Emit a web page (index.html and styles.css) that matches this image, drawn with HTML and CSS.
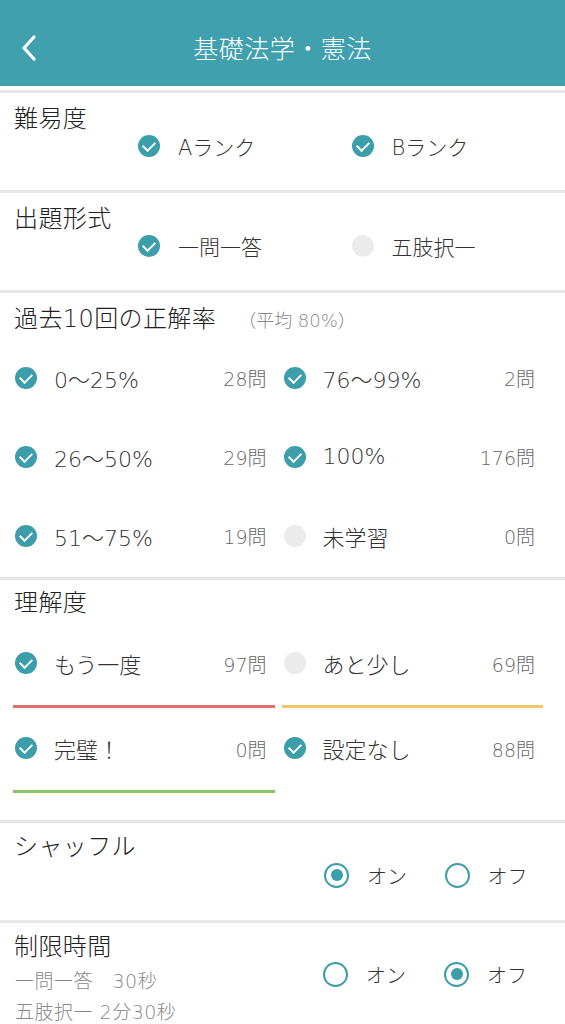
FILE: index.html
```html
<!DOCTYPE html>
<html lang="ja">
<head>
    <meta charset="UTF-8">
    <meta name="viewport" content="width=device-width, initial-scale=1.0">
    <title>基礎法学・憲法</title>
    <link rel="stylesheet" href="styles.css">
</head>
<body>
    <header class="app-bar">
        <button class="back" aria-label="戻る">
            <svg width="18" height="28" viewBox="0 0 18 28"><polyline points="14,3 4,14 14,25" fill="none" stroke="#fff" stroke-width="3.2" stroke-linecap="round" stroke-linejoin="round"/></svg>
        </button>
        <h1 class="app-title">基礎法学・憲法</h1>
    </header>

    <main class="settings">
        <section class="group">
            <h2 class="group-title">難易度</h2>
            <div class="choices">
                <label class="choice"><span class="check on"></span>Aランク</label>
                <label class="choice"><span class="check on"></span>Bランク</label>
            </div>
        </section>

        <section class="group">
            <h2 class="group-title">出題形式</h2>
            <div class="choices">
                <label class="choice"><span class="check on"></span>一問一答</label>
                <label class="choice"><span class="check"></span>五肢択一</label>
            </div>
        </section>

        <section class="group rate">
            <h2 class="group-title">過去10回の正解率<small class="avg">（平均 80%）</small></h2>
            <div class="grid">
                <div class="item"><div class="row"><span class="check on"></span><span class="name">0〜25%</span><span class="count">28問</span></div></div>
                <div class="item"><div class="row"><span class="check on"></span><span class="name">76〜99%</span><span class="count">2問</span></div></div>
                <div class="item"><div class="row"><span class="check on"></span><span class="name">26〜50%</span><span class="count">29問</span></div></div>
                <div class="item"><div class="row"><span class="check on"></span><span class="name">100%</span><span class="count">176問</span></div></div>
                <div class="item"><div class="row"><span class="check on"></span><span class="name">51〜75%</span><span class="count">19問</span></div></div>
                <div class="item"><div class="row"><span class="check"></span><span class="name">未学習</span><span class="count">0問</span></div></div>
            </div>
        </section>

        <section class="group level">
            <h2 class="group-title">理解度</h2>
            <div class="grid">
                <div class="item"><div class="row"><span class="check on"></span><span class="name">もう一度</span><span class="count">97問</span></div><div class="bar red"></div></div>
                <div class="item"><div class="row"><span class="check"></span><span class="name">あと少し</span><span class="count">69問</span></div><div class="bar yellow"></div></div>
                <div class="item"><div class="row"><span class="check on"></span><span class="name">完璧！</span><span class="count">0問</span></div><div class="bar green"></div></div>
                <div class="item"><div class="row"><span class="check on"></span><span class="name">設定なし</span><span class="count">88問</span></div></div>
            </div>
        </section>

        <section class="group switch">
            <h2 class="group-title">シャッフル</h2>
            <div class="radios">
                <label class="radio"><span class="dot on"></span>オン</label>
                <label class="radio"><span class="dot"></span>オフ</label>
            </div>
        </section>

        <section class="group switch timer">
            <div class="timer-info">
                <h2 class="group-title">制限時間</h2>
                <p class="note">一問一答　30秒</p>
                <p class="note">五肢択一 2分30秒</p>
            </div>
            <div class="radios">
                <label class="radio"><span class="dot"></span>オン</label>
                <label class="radio"><span class="dot on"></span>オフ</label>
            </div>
        </section>
    </main>
</body>
</html>
```

FILE: styles.css
```css
:root {
    --teal: #41a0ae;
    --check: #3c9dab;
    --off: #ebebeb;
    --line: #e6e6eb;
    --text: #222;
    --muted: #666;
}

* {
    box-sizing: border-box;
    margin: 0;
    padding: 0;
}

body {
    /* DejaVu gives the wide digits, CJK falls through to Noto */
    font-family: "DejaVu Sans", "Noto Sans CJK JP", sans-serif;
    font-weight: 300;
    color: var(--text);
    background: #fff;
    overflow: hidden;
}

.app-bar {
    height: 86px;
    background: var(--teal);
    display: flex;
    align-items: center;
    justify-content: center;
    position: relative;
}

.back {
    position: absolute;
    left: 20px;
    top: 34px;
    background: none;
    border: none;
    display: flex;
}

.app-title {
    color: #fff;
    font-size: 25px;
    font-weight: 300;
    letter-spacing: 0.5px;
    margin-top: 8px;
}

.settings {
    margin-top: 4px;
}

.group {
    border-top: 3px solid var(--line);
    padding: 13px 0 31px;
}

.group-title {
    font-size: 24px;
    font-weight: 300;
    line-height: 26px;
    padding-left: 14px;
    letter-spacing: 0.4px;
}

.avg {
    font-size: 18px;
    color: #888;
    margin-left: 22px;
    letter-spacing: 0;
}

/* check circles */
.check {
    width: 22px;
    height: 22px;
    border-radius: 50%;
    background: var(--off);
    flex-shrink: 0;
    position: relative;
}

.check.on {
    background: var(--check);
}

.check.on::after {
    content: "";
    position: absolute;
    left: 7px;
    top: 4px;
    width: 6px;
    height: 10px;
    border: solid #fff;
    border-width: 0 2.6px 2.6px 0;
    transform: rotate(45deg);
}

.choices {
    display: flex;
    padding-left: 138px;
    height: 26px;
    align-items: center;
    margin-top: 1px;
}

.choice {
    width: 214px;
    display: flex;
    align-items: center;
    gap: 18px;
    font-size: 21px;
    color: #333;
}

/* two column lists */
.grid {
    display: grid;
    grid-template-columns: 1fr 1fr;
    column-gap: 7px;
    padding: 0 22px 0 13px;
}

.rate {
    padding-bottom: 2px;
}

.rate .grid {
    margin-top: 4px;
}

.rate .row {
    height: 79px;
}

.row {
    display: flex;
    align-items: center;
    padding: 0 8px 0 2px;
    height: 50px;
}

.name {
    margin-left: 17px;
    font-size: 22px;
    color: #333;
    flex: 1;
}

.count {
    font-size: 19px;
    color: var(--muted);
}

.level {
    padding: 10px 0 12px;
}

.level .grid {
    margin-top: 22px;
}

.level .item {
    height: 85px;
}

.bar {
    height: 3px;
    margin-top: 17px;
}

.red { background: #e36f6a; }
.yellow { background: #ebc86b; }
.green { background: #8ac464; }

/* radios */
.switch {
    padding: 11px 0 32px;
}

.radios {
    display: flex;
    padding-left: 324px;
    height: 26px;
    align-items: center;
    margin-top: 2px;
}

.radio {
    width: 121px;
    display: flex;
    align-items: center;
    gap: 18px;
    font-size: 20px;
    color: #333;
}

.dot {
    width: 25px;
    height: 25px;
    border-radius: 50%;
    border: 2.5px solid var(--check);
    display: flex;
    align-items: center;
    justify-content: center;
}

.dot.on::after {
    content: "";
    width: 12px;
    height: 12px;
    border-radius: 50%;
    background: var(--check);
}

.timer {
    display: flex;
    padding-bottom: 10px;
}

.timer-info {
    width: 324px;
}

.timer .radios {
    padding-left: 0;
    margin-top: 27px;
}

.note {
    font-size: 19px;
    color: #888;
    line-height: 31px;
    padding-left: 15px;
    letter-spacing: 0.5px;
}

.timer-info .group-title + .note {
    margin-top: 6px;
}
```
